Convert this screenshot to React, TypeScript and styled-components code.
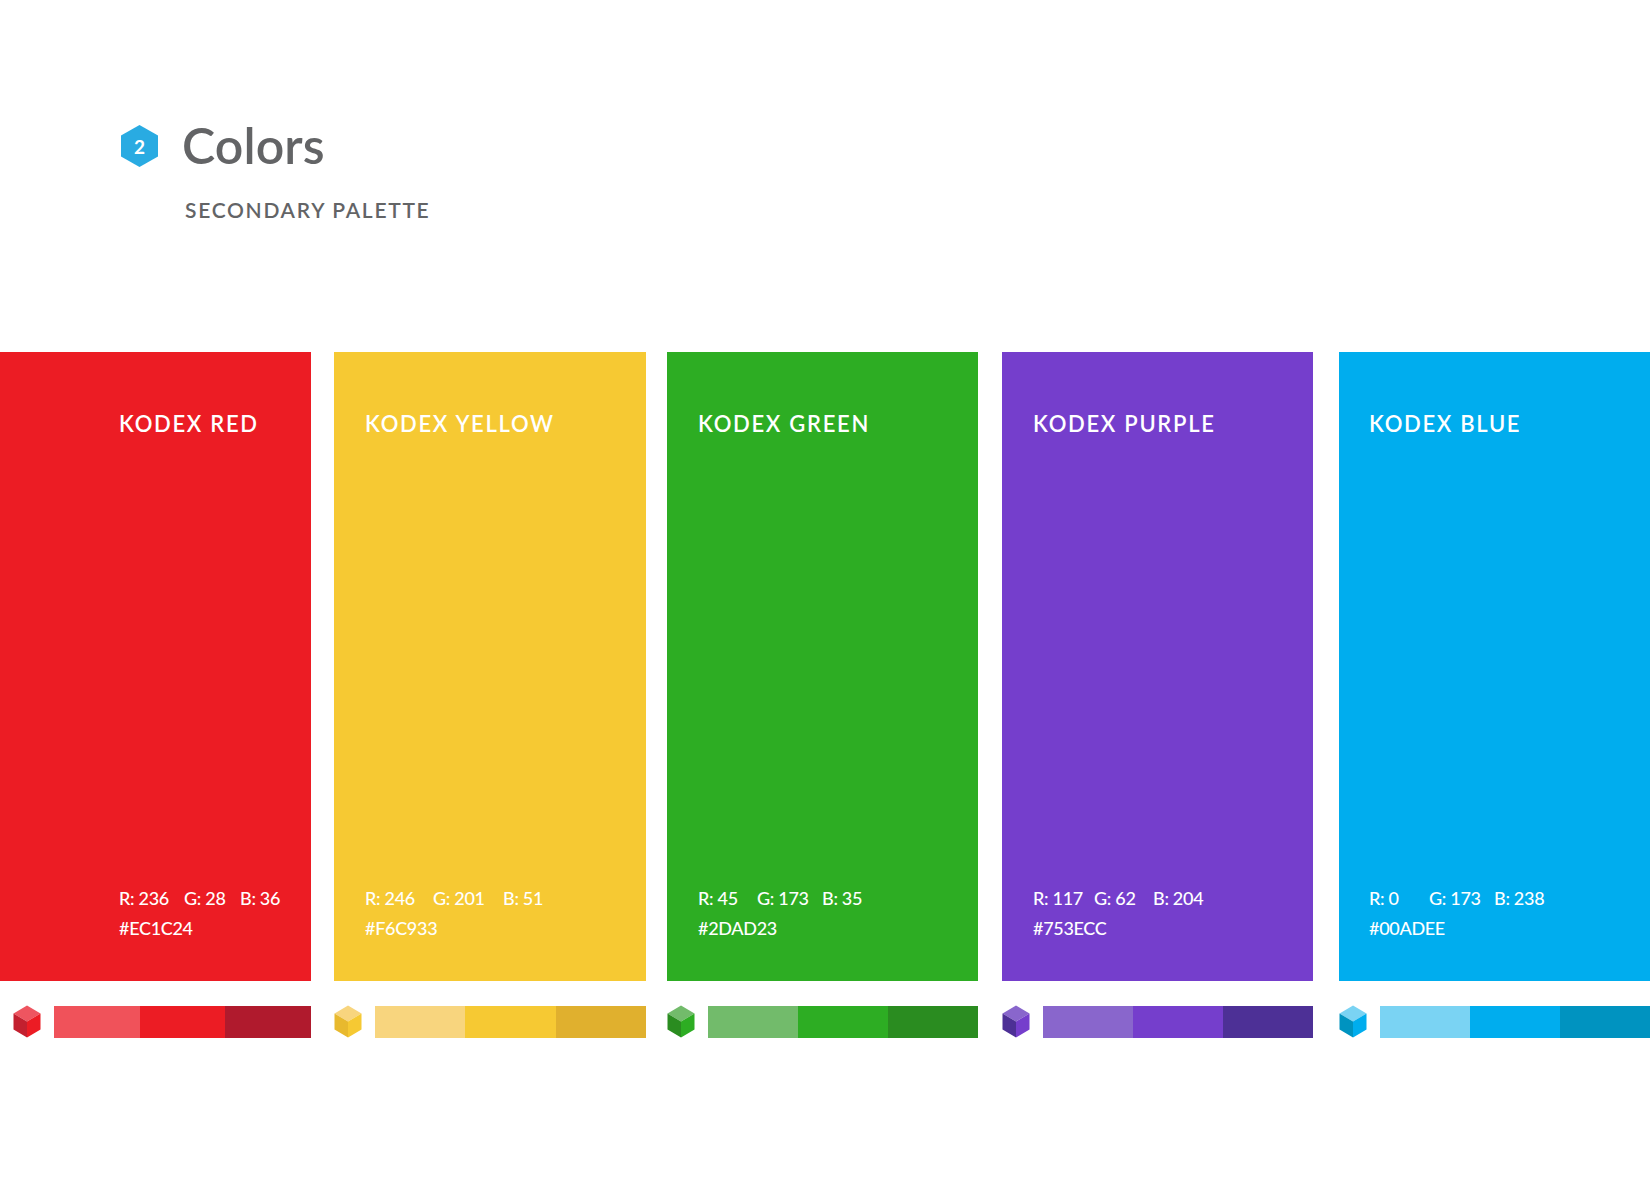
import React from "react"
import styled, { createGlobalStyle } from "styled-components"

const GlobalStyle = createGlobalStyle`
  html, body {
    margin: 0;
    padding: 0;
    background: #fff;
  }
`

const Page = styled.div`
  width: 1650px;
  height: 1197px;
  overflow: hidden;
  background: #fff;
  font-family: Lato, "Liberation Sans", sans-serif;
`

const Header = styled.header`
  height: 352px;
  padding: 125px 0 0 121px;
  box-sizing: border-box;
  color: #636466;
`

const TitleRow = styled.div`
  display: flex;
  align-items: center;
  gap: 24px;
  height: 42px;
`

const HexBadge = styled.div`
  position: relative;
  width: 37px;
  height: 42px;
  display: flex;
  align-items: center;
  justify-content: center;

  svg {
    position: absolute;
    inset: 0;
  }

  span {
    position: relative;
    color: #fff;
    font-size: 19px;
    font-weight: 700;
    line-height: 1;
  }
`

const Title = styled.h1`
  margin: -2px 0 0;
  font-size: 50px;
  font-weight: 600;
  line-height: 42px;
  letter-spacing: 0.1px;
`

const Subtitle = styled.h2`
  margin: 30px 0 0 64px;
  font-size: 21px;
  font-weight: 600;
  line-height: 26px;
  letter-spacing: 1.7px;
  text-transform: uppercase;
`

const Palette = styled.main`
  display: flex;
  align-items: flex-start;
`

const Column = styled.section<{ $width: number; $offset: number }>`
  flex: none;
  width: ${p => p.$width}px;
  margin-left: ${p => p.$offset}px;
`

const Panel = styled.div<{ $color: string; $inset: number }>`
  height: 629px;
  box-sizing: border-box;
  padding: 58px 0 38px ${p => p.$inset}px;
  display: flex;
  flex-direction: column;
  justify-content: space-between;
  background: ${p => p.$color};
  color: #fff;
`

const Name = styled.div`
  font-size: 22px;
  font-weight: 600;
  line-height: 28px;
  letter-spacing: 1.7px;
`

const Specs = styled.div`
  font-size: 18px;
  font-weight: 500;
  line-height: 30px;
  letter-spacing: -0.3px;
`

const Channels = styled.div`
  display: flex;
`

const Channel = styled.span<{ $width: number }>`
  flex: none;
  width: ${p => p.$width}px;
`

const SwatchRow = styled.div<{ $inset: number }>`
  display: flex;
  align-items: center;
  gap: 13px;
  height: 33px;
  margin-top: 24px;
  padding-left: ${p => p.$inset}px;
`

const Swatches = styled.div`
  flex: 1;
  height: 32px;
  display: flex;
`

const Swatch = styled.div<{ $color: string }>`
  flex: 1;
  background: ${p => p.$color};
`

function Cube({ top, left, right }: { top: string; left: string; right: string }) {
  return (
    <svg width="28" height="33" viewBox="0 0 28 33" style={{ flex: "none" }}>
      <path d="M14 .5 27.5 8.5 14 16.5.5 8.5Z" fill={top} />
      <path d="M.5 8.5 14 16.5V32.5L.5 24.5Z" fill={left} />
      <path d="M27.5 8.5 14 16.5V32.5L27.5 24.5Z" fill={right} />
    </svg>
  )
}

const colors = [
  {
    name: "KODEX RED",
    hex: "#EC1C24",
    width: 311,
    offset: 0,
    inset: 119,
    cubeInset: 13,
    channels: [["R: 236", 65], ["G: 28", 56], ["B: 36", 60]],
    shades: ["#F0525A", "#EC1C24", "#B01A2D"],
    cube: ["#EE5560", "#C3202F", "#EC1C24"],
  },
  {
    name: "KODEX YELLOW",
    hex: "#F6C933",
    width: 312,
    offset: 23,
    inset: 31,
    cubeInset: 0,
    channels: [["R: 246", 68], ["G: 201", 70], ["B: 51", 50]],
    shades: ["#F8D57E", "#F6C933", "#E0B02E"],
    cube: ["#F8D57E", "#E8B92E", "#F6C933"],
  },
  {
    name: "KODEX GREEN",
    hex: "#2DAD23",
    width: 311,
    offset: 21,
    inset: 31,
    cubeInset: 0,
    channels: [["R: 45", 59], ["G: 173", 65], ["B: 35", 50]],
    shades: ["#72BB6B", "#2DAD23", "#2A8C20"],
    cube: ["#72BB6B", "#2A8C20", "#2DAD23"],
  },
  {
    name: "KODEX PURPLE",
    hex: "#753ECC",
    width: 311,
    offset: 24,
    inset: 31,
    cubeInset: 0,
    channels: [["R: 117", 61], ["G: 62", 59], ["B: 204", 60]],
    shades: ["#8966CC", "#753ECC", "#4D3096"],
    cube: ["#8966CC", "#4D3096", "#753ECC"],
  },
  {
    name: "KODEX BLUE",
    hex: "#00ADEE",
    width: 311,
    offset: 26,
    inset: 30,
    cubeInset: 0,
    channels: [["R: 0", 60], ["G: 173", 65], ["B: 238", 60]],
    shades: ["#7AD3F3", "#00ADEE", "#0093C0"],
    cube: ["#7AD3F3", "#0093C0", "#00ADEE"],
  },
] as const

export default function App() {
  return (
    <Page>
      <GlobalStyle />
      <Header>
        <TitleRow>
          <HexBadge>
            <svg width="37" height="42" viewBox="0 0 37 42">
              <path d="M18.5 0 37 10.5V31.5L18.5 42 0 31.5V10.5Z" fill="#29ABE2" />
            </svg>
            <span>2</span>
          </HexBadge>
          <Title>Colors</Title>
        </TitleRow>
        <Subtitle>Secondary Palette</Subtitle>
      </Header>
      <Palette>
        {colors.map(color => (
          <Column key={color.name} $width={color.width} $offset={color.offset}>
            <Panel $color={color.hex} $inset={color.inset}>
              <Name>{color.name}</Name>
              <Specs>
                <Channels>
                  {color.channels.map(([label, width]) => (
                    <Channel key={label} $width={width}>
                      {label}
                    </Channel>
                  ))}
                </Channels>
                <div>{color.hex}</div>
              </Specs>
            </Panel>
            <SwatchRow $inset={color.cubeInset}>
              <Cube top={color.cube[0]} left={color.cube[1]} right={color.cube[2]} />
              <Swatches>
                {color.shades.map(shade => (
                  <Swatch key={shade} $color={shade} />
                ))}
              </Swatches>
            </SwatchRow>
          </Column>
        ))}
      </Palette>
    </Page>
  )
}
